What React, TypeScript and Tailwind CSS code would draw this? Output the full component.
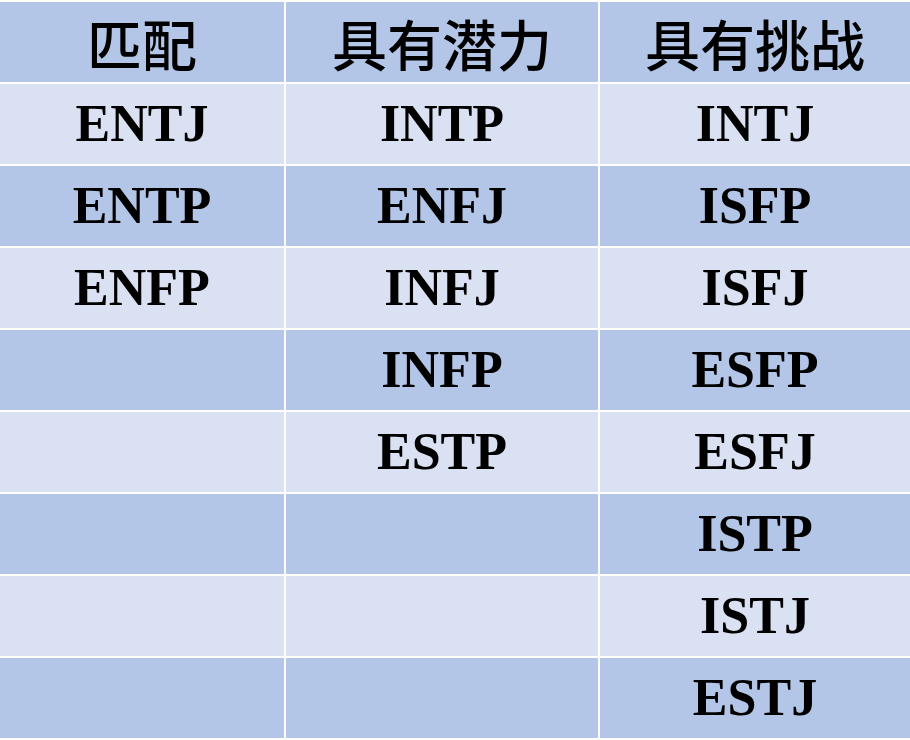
const rows: [string, string, string][] = [
  ["ENTJ", "INTP", "INTJ"],
  ["ENTP", "ENFJ", "ISFP"],
  ["ENFP", "INFJ", "ISFJ"],
  ["", "INFP", "ESFP"],
  ["", "ESTP", "ESFJ"],
  ["", "", "ISTP"],
  ["", "", "ISTJ"],
  ["", "", "ESTJ"],
];

const headers = ["匹配", "具有潜力", "具有挑战"];

export default function App() {
  return (
    <div className="h-[740px] w-[910px] overflow-hidden bg-white pt-[2px]">
      <div className="grid grid-cols-[284px_312px_310px] grid-rows-[repeat(9,80px)] gap-[2px] font-['Liberation_Serif','Noto_Sans_CJK_SC',serif] text-black">
        {headers.map((h) => (
          <div
            key={h}
            className="flex items-center justify-center bg-[#b4c6e7] font-['Noto_Sans_CJK_SC',sans-serif] text-[55px] font-medium leading-none"
          >
            {h}
          </div>
        ))}
        {rows.map((row, i) =>
          row.map((cell, j) => (
            <div
              key={`${i}-${j}`}
              className={[
                "flex items-center justify-center text-[52px] font-bold leading-none",
                i % 2 === 0 ? "bg-[#d9e1f2]" : "bg-[#b4c6e7]",
              ].join(" ")}
            >
              {cell}
            </div>
          ))
        )}
      </div>
    </div>
  );
}
